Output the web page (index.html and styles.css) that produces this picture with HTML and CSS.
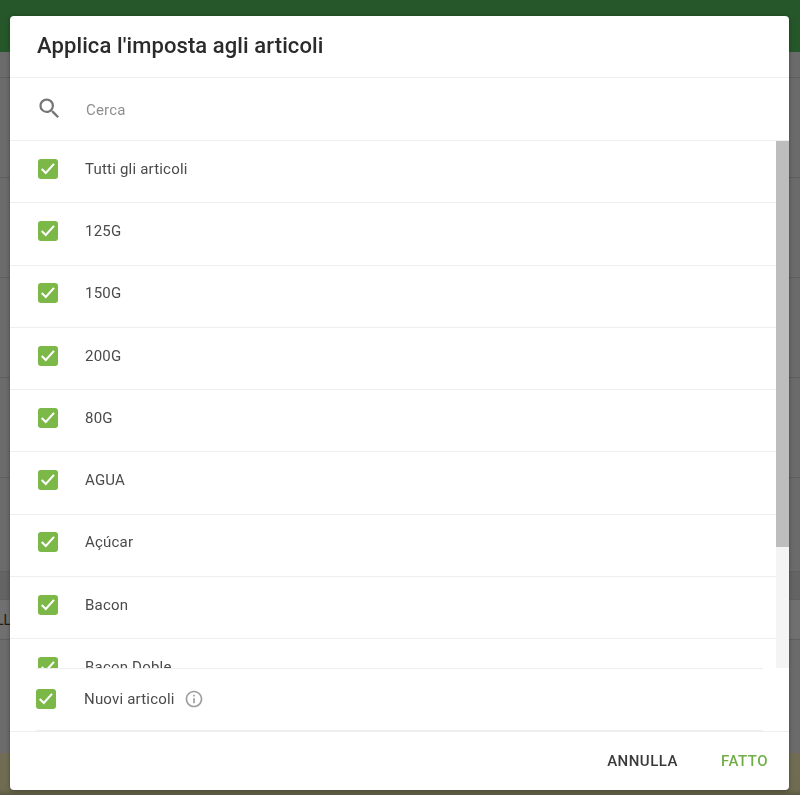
FILE: index.html
```html
<!DOCTYPE html>
<html lang="it">
<head>
    <meta charset="UTF-8">
    <title>Applica l'imposta agli articoli</title>
    <link rel="stylesheet" href="styles.css">
</head>
<body>
<svg class="defs" width="0" height="0">
    <symbol id="check" viewBox="0 0 20 20">
        <path d="M3.7 9.9l4.1 4 8.2-9" fill="none" stroke="#fff" stroke-width="2.1"/>
    </symbol>
</svg>

<!-- Page behind the dialog -->
<div class="page">
    <div class="topbar"></div>
    <div class="bg-row bg-row-first"></div>
    <div class="bg-row"></div>
    <div class="bg-row"></div>
    <div class="bg-row"></div>
    <div class="bg-row"></div>
    <div class="bg-row bg-row-short"></div>
    <div class="bg-band"></div>
    <div class="bg-total">LL</div>
    <div class="bg-fill"></div>
    <div class="bg-bottom"></div>
</div>

<!-- Apply to items dialog -->
<div class="modal">
    <h2 class="modal-title">Applica l'imposta agli articoli</h2>

    <div class="search">
        <svg class="search-icon" viewBox="0 0 24 24">
            <path d="M15.5 14h-.79l-.28-.27A6.47 6.47 0 0 0 16 9.5 6.5 6.5 0 1 0 9.5 16c1.61 0 3.09-.59 4.23-1.57l.27.28v.79l5 4.99L20.49 19l-4.99-5zm-6 0C7.01 14 5 11.99 5 9.5S7.01 5 9.5 5 14 7.01 14 9.5 11.99 14 9.5 14z"/>
        </svg>
        <span class="search-text">Cerca</span>
    </div>

    <div class="list-wrap">
        <div class="item-list">
            <div class="item"><span class="checkbox"><svg><use href="#check"/></svg></span>Tutti gli articoli</div>
            <div class="item"><span class="checkbox"><svg><use href="#check"/></svg></span>125G</div>
            <div class="item"><span class="checkbox"><svg><use href="#check"/></svg></span>150G</div>
            <div class="item"><span class="checkbox"><svg><use href="#check"/></svg></span>200G</div>
            <div class="item"><span class="checkbox"><svg><use href="#check"/></svg></span>80G</div>
            <div class="item"><span class="checkbox"><svg><use href="#check"/></svg></span>AGUA</div>
            <div class="item"><span class="checkbox"><svg><use href="#check"/></svg></span>Açúcar</div>
            <div class="item"><span class="checkbox"><svg><use href="#check"/></svg></span>Bacon</div>
            <div class="item"><span class="checkbox"><svg><use href="#check"/></svg></span>Bacon Doble</div>
        </div>
        <div class="scrollbar"><div class="scrollbar-thumb"></div></div>
    </div>

    <div class="new-items">
        <span class="checkbox"><svg><use href="#check"/></svg></span>
        <span>Nuovi articoli</span>
        <svg class="info-icon" viewBox="0 0 24 24">
            <path d="M11 7h2v2h-2zm0 4h2v6h-2zm1-9C6.48 2 2 6.48 2 12s4.48 10 10 10 10-4.48 10-10S17.52 2 12 2zm0 18c-4.41 0-8-3.59-8-8s3.59-8 8-8 8 3.59 8 8-3.59 8-8 8z"/>
        </svg>
    </div>

    <div class="modal-actions">
        <button class="btn">ANNULLA</button>
        <button class="btn btn-primary">FATTO</button>
    </div>
</div>
</body>
</html>
```

FILE: styles.css
```css
html, body {
    height: 100%;
}

body {
    margin: 0;
    overflow: hidden;
    font-family: Roboto, "Liberation Sans", sans-serif;
    background-color: #6b6b6b;
}

.defs {
    position: absolute;
}

/* Dimmed page */
.page {
    height: 795px;
    display: flex;
    flex-direction: column;
}

.topbar {
    height: 52px;
    background-color: #26572a;
}

.bg-row {
    height: 99px;
    border-bottom: 1px solid #5f5f5f;
}

.bg-row-first {
    height: 25px;
}

.bg-row-short {
    height: 93px;
}

.bg-band {
    height: 28px;
    border-bottom: 1px solid #5f5f5f;
    background-color: #646464;
    box-sizing: border-box;
}

.bg-total {
    height: 40px;
    line-height: 40px;
    font-size: 14px;
    color: #201a14;
    background-color: #707070;
    text-indent: -4px;
    box-sizing: border-box;
    border-bottom: 1px solid #5f5f5f;
}

.bg-fill {
    flex: 1;
}

.bg-bottom {
    height: 42px;
    background: linear-gradient(#706d54, #6f6c52 36px, #5b5942);
}

/* Dialog */
.modal {
    position: fixed;
    left: 10px;
    top: 16px;
    width: 779px;
    height: 774px;
    display: flex;
    flex-direction: column;
    background-color: #fff;
    border-radius: 4px;
    box-shadow: 0 1px 4px rgba(0, 0, 0, 0.35);
    overflow: hidden;
}

.modal-title {
    margin: 0;
    height: 62px;
    box-sizing: border-box;
    padding-left: 27px;
    line-height: 60px;
    font-size: 22px;
    font-weight: 500;
    letter-spacing: 0.1px;
    color: #2b2b2b;
    border-bottom: 1px solid #eeeeee;
    flex-shrink: 0;
}

.search {
    height: 63px;
    box-sizing: border-box;
    display: flex;
    align-items: center;
    padding-left: 26px;
    border-bottom: 1px solid #eeeeee;
    flex-shrink: 0;
}

.search-icon {
    width: 27px;
    height: 27px;
    fill: #757575;
    margin-bottom: 1px;
}

.search-text {
    margin-left: 23px;
    margin-top: 2px;
    font-size: 15px;
    letter-spacing: 0.2px;
    color: #8f8f8f;
}

.list-wrap {
    flex: 1;
    min-height: 0;
    display: flex;
}

.item-list {
    flex: 1;
    overflow: hidden;
}

.scrollbar {
    width: 13px;
    background-color: #f4f4f4;
}

.scrollbar-thumb {
    height: 406px;
    background-color: #bdbdbd;
}

.item {
    height: 62.3px;
    box-sizing: border-box;
    display: flex;
    align-items: center;
    padding: 0 0 6px 28px;
    font-size: 15px;
    letter-spacing: 0.2px;
    color: #4a4a4a;
    border-bottom: 1px solid #eeeeee;
}

.checkbox {
    width: 20px;
    height: 20px;
    border-radius: 3px;
    background-color: #7cb848;
    margin-right: 27px;
    flex-shrink: 0;
}

.checkbox svg {
    display: block;
    width: 20px;
    height: 20px;
}

.new-items {
    height: 63px;
    box-sizing: border-box;
    margin: 0 26px;
    padding-bottom: 1px;
    display: flex;
    align-items: center;
    font-size: 15px;
    letter-spacing: 0.2px;
    color: #4a4a4a;
    border-top: 1px solid #eeeeee;
    border-bottom: 1px solid #eeeeee;
    flex-shrink: 0;
}

.new-items .checkbox {
    margin-right: 28px;
}

.info-icon {
    width: 20px;
    height: 20px;
    margin-left: 9px;
    fill: #9e9e9e;
}

.modal-actions {
    height: 59px;
    box-sizing: border-box;
    display: flex;
    justify-content: flex-end;
    align-items: center;
    gap: 43px;
    padding-right: 21px;
    border-top: 1px solid #eeeeee;
    flex-shrink: 0;
}

.btn {
    padding: 0;
    border: none;
    background: none;
    font-family: inherit;
    font-size: 15px;
    font-weight: 500;
    letter-spacing: 0.5px;
    color: #3a3a3a;
    cursor: pointer;
}

.btn-primary {
    color: #72ae48;
}
```
